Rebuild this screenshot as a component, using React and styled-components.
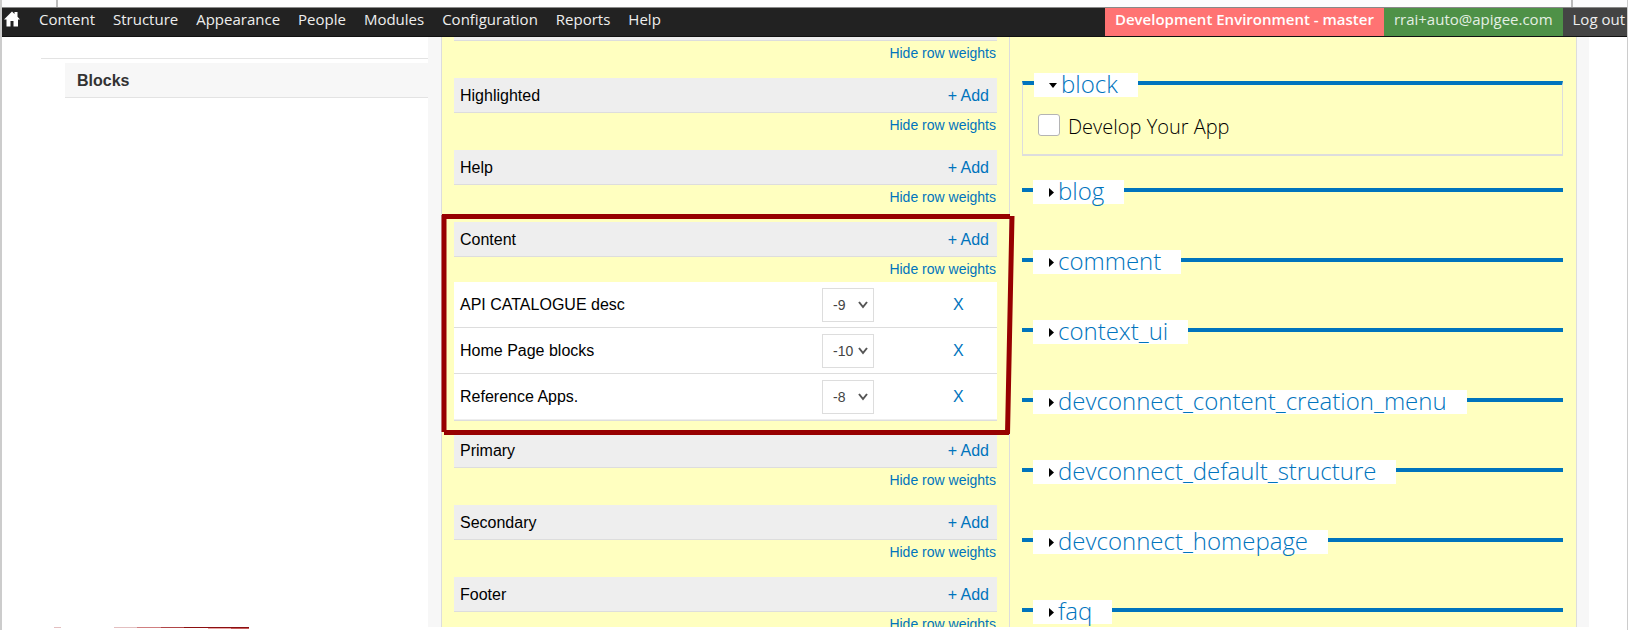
import React from "react";
import styled, { createGlobalStyle } from "styled-components";

const GlobalStyle = createGlobalStyle`
  * { box-sizing: border-box; }
  body { margin: 0; background: #fff; color: #000; font-family: "Liberation Sans", Arial, sans-serif; font-size: 16px; }
  a { color: #0074bd; text-decoration: none; }
`;

const Page = styled.div`
  display: flex;
  flex-direction: column;
  height: 100vh;
  overflow: hidden;
  border-left: 2px solid #ccc;
  border-right: 1px solid #ccc;
`;

const TopStrip = styled.div`
  display: flex;
  justify-content: space-between;
  flex: none;
  height: 8px;
  padding: 0 54px;
  background: #fcfcfd;
  border-bottom: 1px solid #888;
`;

const Tick = styled.span`
  width: 2px;
  background: #bbb;
`;

const Bar = styled.nav`
  display: flex;
  flex: none;
  height: 29px;
  background: #222;
  border-bottom: 1px solid #111;
  font-family: "Open Sans", sans-serif;
  font-size: 15px;
  line-height: 22px;
`;

const HomeLink = styled.a`
  display: block;
  width: 28px;
  padding: 3px 0 0 2px;
  svg { display: block; }
`;

const BarLink = styled.a`
  padding: 0 9px;
  color: #eee;
  white-space: nowrap;
`;

const BarEnd = styled.div`
  display: flex;
  margin-left: auto;
`;

const Badge = styled.a`
  padding: 0 ${(p) => (p.$last ? 2 : 10)}px 0 10px;
  background: ${(p) => p.$bg};
  color: ${(p) => p.$color || "#fff"};
  font-weight: ${(p) => (p.$bold ? 600 : 400)};
  white-space: nowrap;
`;

const Body = styled.div`
  display: grid;
  grid-template-columns: 426fr 1161fr 38fr;
  flex: 1;
  min-height: 0;
  overflow: hidden;
`;

const Sidebar = styled.aside`
  padding-left: 39px;
`;

const SidebarRule = styled.div`
  height: 22px;
  border-bottom: 1px solid #e3e3e3;
`;

const SidebarHeading = styled.h2`
  margin: 4px 0 0 24px;
  padding: 2px 12px 0;
  background: #f7f7f7;
  border-bottom: 1px solid #e3e3e3;
  color: #333;
  font-size: 16px;
  line-height: 32px;
`;

const Main = styled.main`
  display: grid;
  grid-template-columns: 569fr 567fr;
  padding: 0 12px 0 13px;
  background: #f7f7f7;
`;

const Regions = styled.div`
  padding: 0 12px;
  background: #ffffc0;
  border: 1px solid #ddd;
  border-width: 0 1px;
`;

const BandEdge = styled.div`
  height: 4px;
  background: #eee;
  border-bottom: 1px solid #ddd;
`;

const Region = styled.section`
  position: relative;
  margin-bottom: 12px;
`;

const Band = styled.header`
  display: flex;
  justify-content: space-between;
  height: 35px;
  padding: 0 8px 0 6px;
  background: #eee;
  border-bottom: 1px solid #ddd;
  line-height: 35px;
`;

const BandTitle = styled.h3`
  margin: 0;
  font-size: 16px;
  font-weight: 400;
`;

const WeightsToggle = styled.a`
  display: block;
  padding-right: 1px;
  font-size: 14px;
  line-height: 25px;
  text-align: right;
`;

const BlockTable = styled.table`
  width: 100%;
  table-layout: fixed;
  border-collapse: separate;
  border-spacing: 0;
  border-bottom: 1px solid #ddd;
  background: #fff;
`;

const Cell = styled.td`
  width: ${(p) => p.$width || "auto"};
  height: 46px;
  padding: 0 6px;
  border-bottom: 1px solid #ddd;
  tr:last-child > & { border-bottom-color: #eee; }
`;

const SelectBox = styled.div`
  position: relative;
  width: 52px;
  svg { position: absolute; right: 6px; top: 13px; pointer-events: none; }
`;

const WeightSelect = styled.select`
  display: block;
  width: 100%;
  height: 34px;
  padding: 0 10px;
  appearance: none;
  background: #fff;
  border: 1px solid #ddd;
  border-radius: 0;
  color: #444;
  font: 14px "Liberation Sans", Arial, sans-serif;
`;

const Outline = styled.svg`
  position: absolute;
  inset: -9px -18px -15px -13px;
  width: calc(100% + 31px);
  height: calc(100% + 24px);
  z-index: 1;
  pointer-events: none;
`;

const Modules = styled.div`
  padding: 36px 13px 0 12px;
  background: #ffffc0;
  border-right: 1px solid #ddd;
`;

const Group = styled.fieldset`
  min-width: 0;
  height: ${(p) => (p.$open ? 83 : 46)}px;
  margin: 0 0 24px;
  padding: 0 ${(p) => (p.$open ? 15 : 11)}px;
  border: 0 solid #ddd;
  border-width: ${(p) => (p.$open ? "4px 1px 2px" : "4px 0 0")};
  border-top-color: #0074bd;
`;

const GroupLegend = styled.legend`
  height: 20px;
  margin-left: ${(p) => (p.$open ? -4 : 0)}px;
  padding: 0;
`;

const GroupToggle = styled.button`
  display: flex;
  align-items: center;
  gap: 4px;
  height: 24px;
  padding: 0 20px 2px 15px;
  border: 0;
  background: #fff;
  color: #0074bd;
  font: 300 24px/22px "Open Sans", sans-serif;
  white-space: nowrap;
  svg { margin-top: 2px; }
`;

const CheckLabel = styled.label`
  display: flex;
  align-items: flex-start;
  gap: 8px;
  margin-top: 19px;
  font: 300 20px/30px "Open Sans", sans-serif;
`;

const Check = styled.input`
  appearance: none;
  width: 22px;
  height: 22px;
  margin: 2px 0;
  background: #fff;
  border: 1px solid #b4b4b4;
  border-radius: 3px;
`;

const Bottom = styled.footer`
  flex: none;
  height: 3px;
  svg { display: block; }
`;

const MENU = ["Content", "Structure", "Appearance", "People", "Modules", "Configuration", "Reports", "Help"];

const REGIONS = [
  { title: "Highlighted" },
  { title: "Help" },
  {
    title: "Content",
    outlined: true,
    blocks: [
      { name: "API CATALOGUE desc", weight: -9 },
      { name: "Home Page blocks", weight: -10 },
      { name: "Reference Apps.", weight: -8 },
    ],
  },
  { title: "Primary" },
  { title: "Secondary" },
  { title: "Footer" },
];

const MODULES = [
  "blog",
  "comment",
  "context_ui",
  "devconnect_content_creation_menu",
  "devconnect_default_structure",
  "devconnect_homepage",
  "faq",
];

const WEIGHTS = [-10, -9, -8];

function HomeIcon() {
  return (
    <svg width="16" height="16" viewBox="0 0 16 16" aria-hidden="true">
      <path fill="#fff" d="M8 .5 0 8.500h2.500v7h4V10h3v5.500H14v-7h2l-2.500-2.800V1h-3v2z" />
    </svg>
  );
}

function Arrow({ open }) {
  return (
    <svg width={open ? 8 : 6} height="9" viewBox={open ? "0 0 8 9" : "0 0 6 9"} aria-hidden="true">
      <path d={open ? "M0 2h8L4 7z" : "M1 0l5 4.500L1 9z"} />
    </svg>
  );
}

function RegionOutline() {
  return (
    <Outline viewBox="0 0 574 223" preserveAspectRatio="none" aria-hidden="true">
      <path d="M1 3.500H569M3 2V219M571 3 566.500 221M3 219.500H568" fill="none" stroke="#970000" strokeWidth="5" vectorEffect="non-scaling-stroke" />
    </Outline>
  );
}

function BlockRow({ name, weight }) {
  return (
    <tr>
      <Cell>{name}</Cell>
      <Cell $width="131px">
        <SelectBox>
          <WeightSelect aria-label={`Weight for ${name}`} defaultValue={weight}>
            {WEIGHTS.map((w) => (
              <option key={w}>{w}</option>
            ))}
          </WeightSelect>
          <svg width="10" height="8" viewBox="0 0 10 8" aria-hidden="true">
            <path d="M1 1l4 5 4-5" fill="none" stroke="#555" strokeWidth="2" />
          </svg>
        </SelectBox>
      </Cell>
      <Cell $width="50px">
        <a href="#remove">X</a>
      </Cell>
    </tr>
  );
}

export default function App() {
  return (
    <Page>
      <GlobalStyle />
      <TopStrip>
        <Tick />
        <Tick />
      </TopStrip>
      <Bar>
        <HomeLink href="#home" aria-label="Home">
          <HomeIcon />
        </HomeLink>
        {MENU.map((item) => (
          <BarLink key={item} href={`#${item.toLowerCase()}`}>{item}</BarLink>
        ))}
        <BarEnd>
          <Badge href="#environment" $bg="#ff7373" $bold>Development Environment - master</Badge>
          <Badge href="#account" $bg="#4e9147" $color="#e4efe3">rrai+auto@apigee.com</Badge>
          <Badge href="#logout" $bg="#444" $color="#eee" $last>Log out</Badge>
        </BarEnd>
      </Bar>
      <Body>
        <Sidebar>
          <SidebarRule />
          <SidebarHeading>Blocks</SidebarHeading>
        </Sidebar>
        <Main>
          <Regions>
            <BandEdge />
            <Region>
              <WeightsToggle href="#weights">Hide row weights</WeightsToggle>
            </Region>
            {REGIONS.map(({ title, blocks, outlined }) => (
              <Region key={title}>
                <Band>
                  <BandTitle>{title}</BandTitle>
                  <a href="#add">+ Add</a>
                </Band>
                <WeightsToggle href="#weights">Hide row weights</WeightsToggle>
                {blocks && (
                  <BlockTable>
                    <tbody>
                      {blocks.map((b) => (
                        <BlockRow key={b.name} {...b} />
                      ))}
                    </tbody>
                  </BlockTable>
                )}
                {outlined && <RegionOutline />}
              </Region>
            ))}
          </Regions>
          <Modules>
            <Group $open>
              <GroupLegend $open>
                <GroupToggle type="button"><Arrow open />block</GroupToggle>
              </GroupLegend>
              <CheckLabel>
                <Check type="checkbox" />
                Develop Your App
              </CheckLabel>
            </Group>
            {MODULES.map((name) => (
              <Group key={name}>
                <GroupLegend>
                  <GroupToggle type="button"><Arrow />{name}</GroupToggle>
                </GroupLegend>
              </Group>
            ))}
          </Modules>
        </Main>
      </Body>
      <Bottom>
        <svg width="260" height="3" viewBox="0 0 260 3" aria-hidden="true">
          <path fill="#e3bfc0" d="M52 0h7v1h-7zM112 0h23v1h-23z" />
          <path fill="#d07f80" d="M135 0h24v1h-24z" />
          <path fill="#b04648" d="M159 0h23v1h-23z" />
          <path fill="#8b0f10" d="M182 0h65v1h-65z" />
          <path fill="#e8a5a5" d="M206 1h23v1h-23z" />
          <path fill="#c65c5c" d="M229 1h18v1h-18z" />
        </svg>
      </Bottom>
    </Page>
  );
}
